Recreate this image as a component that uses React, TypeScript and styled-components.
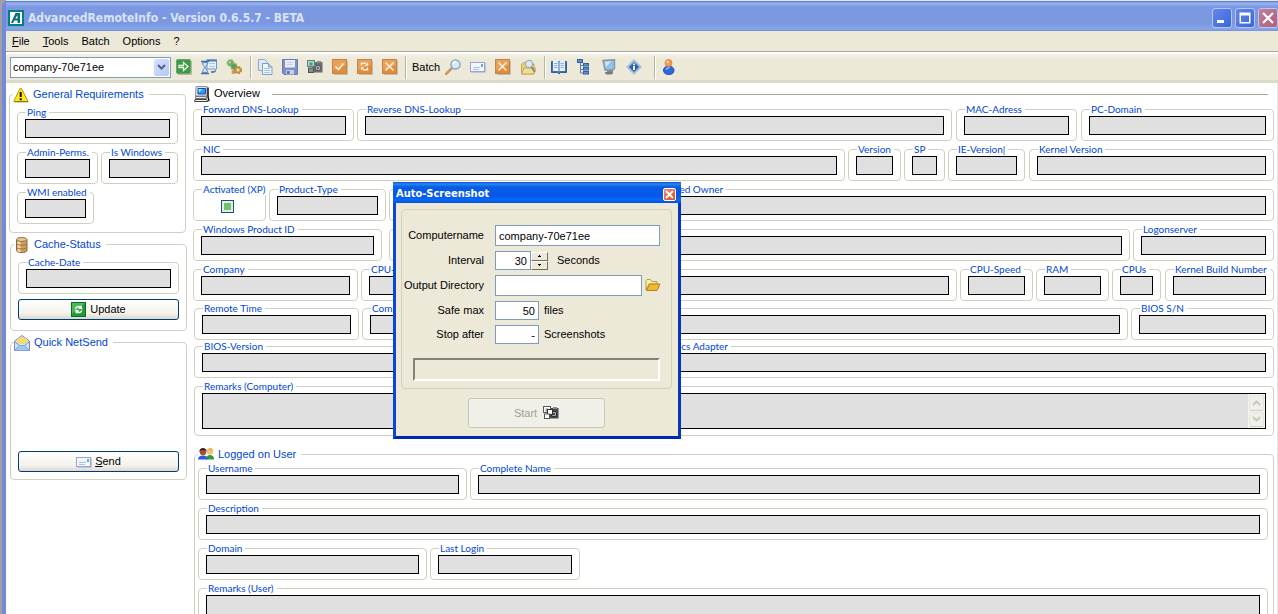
import React, { useId } from "react";
import styled, { createGlobalStyle, css } from "styled-components";

const ui = '"Liberation Sans", Arial, sans-serif';
const face = "#ece9d8";
const groupLine = "#d0d0bf";
const captionBlue = "#0046d5";
const fieldBlue = "#7f9db9";

const Global = createGlobalStyle`
  * { box-sizing: border-box; }
  body { margin: 0; background: #fff; font: 11px/13px ${ui}; color: #000; }
  button, input, select, textarea { font: inherit; color: inherit; margin: 0; }
`;

/* ---------- window frame ---------- */

const Desktop = styled.div`
  position: relative;
  height: 100vh;
  overflow: hidden;
  display: flex;
  background: #a0a0a0;
`;
const WindowFrame = styled.div`
  flex: 1;
  min-width: 0;
  margin-left: 2px;
  display: flex;
  flex-direction: column;
  border-left: 4px solid #7389dc;
  border-top-left-radius: 7px;
  background: #7389dc;
`;
const TitleBar = styled.header`
  height: 31px;
  flex: none;
  display: flex;
  align-items: center;
  padding: 3px 0 0 2px;
  border-top: 1px solid #e4e8f4;
  background: linear-gradient(#4f6fc8 0, #9ab5f2 2px, #7c98e2 6px, #7b97e0 22px, #86a6ea 28px, #7590da 30px);
`;
const Title = styled.h1`
  flex: 1;
  margin: 0 0 0 4px;
  font: bold 12px/16px "DejaVu Sans Condensed", sans-serif;
  color: #d8e4f8;
`;
const CaptionButtons = styled.div`
  display: flex;
  gap: 3px;
`;
const CaptionButton = styled.button<{ $close?: boolean }>`
  width: 20px;
  height: 20px;
  padding: 0;
  display: grid;
  place-items: center;
  border: 1px solid #b8c8f4;
  border-radius: 3px;
  background: ${(p) => (p.$close ? "linear-gradient(135deg, #c08098, #b0607c)" : "linear-gradient(135deg, #6488ea, #3a64dc)")};
`;

const MenuBar = styled.nav`
  height: 20px;
  flex: none;
  display: flex;
  align-items: center;
  gap: 13px;
  padding: 0 6px;
  background: ${face};
`;
const MenuItem = styled.button`
  padding: 0;
  border: 0;
  background: none;
`;

const Toolbar = styled.div`
  height: 32px;
  flex: none;
  display: flex;
  align-items: center;
  padding: 3px 4px 1px;
  border-top: 1px solid #aca899;
  border-bottom: 3px solid #dedac8;
  background: linear-gradient(#fff 0, #fff 2px, #f3f1e6 2px, ${face} 8px);
`;
const HostPicker = styled.div`
  position: relative;
  width: 161px;
  height: 21px;
  border: 1px solid ${fieldBlue};
  background: #fff;
`;
const HostSelect = styled.select`
  appearance: none;
  width: 100%;
  height: 19px;
  padding: 0 18px 0 2px;
  border: 0;
  background: none;
`;
const DropArrow = styled.span`
  position: absolute;
  top: 1px;
  right: 1px;
  width: 15px;
  height: 17px;
  display: grid;
  place-items: center;
  border-radius: 2px;
  background: linear-gradient(135deg, #d4e0fc, #b4c8f6);
  pointer-events: none;
`;
const ToolButton = styled.button`
  width: 25px;
  height: 22px;
  padding: 0;
  display: grid;
  place-items: center;
  border: 0;
  background: none;
`;
const ToolSeparator = styled.span<{ $before?: number }>`
  width: 2px;
  height: 23px;
  margin-left: ${(p) => p.$before ?? 4}px;
  border-left: 1px solid #b8b4a2;
  border-right: 1px solid #fff;
`;
const ToolLabel = styled.span`
  width: 33px;
  padding-left: 5px;
`;

/* ---------- group boxes and fields ---------- */

const Client = styled.div`
  flex: 1;
  min-height: 0;
  display: flex;
  gap: 6px;
  padding: 2px 3px 0;
  overflow: hidden;
  background: #fff;
  border-right: 1px solid #e4e4e4;
`;
const Sidebar = styled.aside`
  width: 178px;
  flex: none;
  display: flex;
  flex-direction: column;
  gap: 3px;
  padding-top: 1px;
`;
const SidebarTop = styled.div`
  padding-right: 1px;
`;
const SidebarRest = styled.div`
  display: flex;
  flex-direction: column;
  gap: 3px;
  padding-left: 1px;
`;
const Section = styled.fieldset`
  min-width: 0;
  margin: 0;
  padding: 0;
  border: 1px solid ${groupLine};
  border-radius: 4px;
`;
const SectionLegend = styled.legend`
  height: 17px;
  margin-left: 3px;
  padding: 0 5px 0 0;
  display: flex;
  align-items: center;
  gap: 4px;
  color: ${captionBlue};
`;
const SectionBody = styled.div<{ $pad: string }>`
  display: flex;
  flex-direction: column;
  padding: ${(p) => p.$pad};
`;

const Row = styled.div<{ $after?: number; $indent?: number }>`
  display: flex;
  gap: 3px;
  margin-bottom: ${(p) => p.$after ?? 3}px;
  margin-left: ${(p) => p.$indent ?? 0}px;
`;
const FieldBox = styled.fieldset<{ $w?: number; $after?: number; $pb?: number }>`
  ${(p) => (p.$w ? css`flex: none; width: ${p.$w}px;` : css`flex: 1;`)}
  min-width: 0;
  margin: 0 ${(p) => p.$after ?? 0}px 0 0;
  padding: 1px 7px ${(p) => p.$pb ?? 5}px;
  border: 1px solid ${groupLine};
  border-radius: 4px;
`;
const FieldLegend = styled.legend`
  height: 11px;
  margin-left: 1px;
  padding: 0 3px 0 1px;
  font: 10px/11px Lato, ${ui};
  color: ${captionBlue};
  white-space: nowrap;
`;
const sunken = css`
  display: block;
  width: 100%;
  padding: 0 2px;
  border: 1px solid #000;
  border-radius: 0;
  outline: 0;
  background: #e0e0e0;
`;
const ReadOnly = styled.input`
  ${sunken}
  height: 19px;
`;
const Remarks = styled.textarea`
  ${sunken}
  height: 36px;
  resize: none;
  overflow: hidden;
`;
const RemarksWrap = styled.div`
  position: relative;
`;
const ScrollButtons = styled.div`
  position: absolute;
  top: 1px;
  right: 1px;
  bottom: 1px;
  width: 17px;
  display: flex;
  flex-direction: column;
  gap: 1px;
  padding: 1px;
  background: #f6f5ef;
`;
const ScrollButton = styled.button`
  flex: 1;
  min-height: 0;
  padding: 0;
  display: grid;
  place-items: center;
  border: 1px solid #e6e5dc;
  border-bottom-color: #cfccb8;
  border-radius: 2px;
  background: #f0f0ea;
`;
const CheckCell = styled.div`
  height: 19px;
  display: grid;
  place-items: center;
  padding: 2px 4px 0 0;
`;
const StateBox = styled.input`
  appearance: none;
  width: 13px;
  height: 13px;
  border: 1px solid #1c5180;
  background: #fff;
  &:checked {
    background: linear-gradient(#73c06f, #73c06f) center / 7px 7px no-repeat, #e6ecdf;
  }
`;
const PushButton = styled.button`
  height: 21px;
  display: flex;
  align-items: center;
  justify-content: center;
  gap: 3px;
  padding: 0;
  border: 1px solid #003c74;
  border-radius: 3px;
  background: linear-gradient(#fff, #f3f2ec 70%, #dcd8cc);
`;
const SendArea = styled.div`
  height: 100px;
`;

const Main = styled.main`
  flex: 1;
  min-width: 0;
`;
const OverviewHead = styled.div`
  height: 17px;
  display: flex;
  align-items: center;
  gap: 4px;
  margin-bottom: 2px;
  padding: 0 6px 0 1px;
`;
const OverviewTitle = styled.h2`
  margin: 0 8px 0 0;
  font: 11px/13px ${ui};
`;
const Rule = styled.hr`
  flex: 1;
  margin: 1px 0 0;
  border: 0;
  border-top: 1px solid #aca899;
`;
const UserSection = styled.div`
  margin: 10px 0 0 1px;
`;

type FieldProps = { label?: string; name?: string; w?: number; after?: number };

function Field({ label, name, w, after }: FieldProps) {
  const id = useId();
  return (
    <FieldBox $w={w} $after={after}>
      <FieldLegend>{label && <label htmlFor={id}>{label}</label>}</FieldLegend>
      <ReadOnly id={id} readOnly aria-label={name} />
    </FieldBox>
  );
}

function RemarksField({ label, scroll }: { label: string; scroll?: boolean }) {
  const id = useId();
  return (
    <FieldBox $pb={6}>
      <FieldLegend><label htmlFor={id}>{label}</label></FieldLegend>
      <RemarksWrap>
        <Remarks id={id} readOnly />
        {scroll && (
          <ScrollButtons>
            <ScrollButton aria-label="Scroll up">
              <svg width="9" height="6" viewBox="0 0 9 6"><path d="M1 5 4.500 1.500 8 5" fill="none" stroke="#c9c7ba" strokeWidth="2" /></svg>
            </ScrollButton>
            <ScrollButton aria-label="Scroll down">
              <svg width="9" height="6" viewBox="0 0 9 6"><path d="M1 1 4.500 4.500 8 1" fill="none" stroke="#c9c7ba" strokeWidth="2" /></svg>
            </ScrollButton>
          </ScrollButtons>
        )}
      </RemarksWrap>
    </FieldBox>
  );
}

/* ---------- dialog ---------- */

const Dialog = styled.section`
  position: absolute;
  left: 393px;
  top: 182px;
  width: 288px;
  display: flex;
  flex-direction: column;
  border: 3px solid #0a46d8;
  border-top: 0;
  border-right-color: #0636c0;
  border-bottom-color: #0226b4;
  background: ${face};
`;
const DialogTitleBar = styled.header`
  height: 21px;
  margin: 0 -3px;
  padding: 3px 5px 0 3px;
  display: flex;
  align-items: center;
  justify-content: space-between;
  background: linear-gradient(#0a4ad0, #2a86f4 2px, #0a5ce4 5px, #0458e8 14px, #0768f8 18px, #0450d8);
`;
const DialogTitle = styled.h2`
  margin: 0;
  font: bold 11px/14px "DejaVu Sans Condensed", sans-serif;
  color: #fff;
`;
const DialogClose = styled.button`
  width: 13px;
  height: 13px;
  padding: 0;
  display: grid;
  place-items: center;
  border: 1px solid #fff;
  border-radius: 2px;
  background: linear-gradient(135deg, #f09078, #d84820);
`;
const DialogBody = styled.form`
  display: flex;
  flex-direction: column;
  align-items: center;
  gap: 9px;
  padding: 6px 6px 8px 5px;
`;
const Panel = styled.div`
  width: 100%;
  display: flex;
  flex-direction: column;
  gap: 5px;
  padding: 15px 0 7px;
  border: 1px solid ${groupLine};
  border-radius: 4px;
`;
const FormRow = styled.div`
  display: flex;
  align-items: center;
`;
const FormLabel = styled.label`
  width: 82px;
  margin-right: 11px;
  text-align: right;
  white-space: nowrap;
`;
const TextBox = styled.input<{ $w: number; $short?: boolean }>`
  width: ${(p) => p.$w}px;
  height: ${(p) => (p.$short ? 19 : 21)}px;
  padding: 0 3px;
  border: 1px solid ${fieldBlue};
  border-radius: 0;
  outline: 0;
  background: #fff;
  text-align: ${(p) => (p.$short ? "right" : "left")};
`;
const Suffix = styled.span<{ $gap: number }>`
  margin-left: ${(p) => p.$gap}px;
`;
const Spinner = styled.span`
  display: flex;
  flex-direction: column;
  width: 17px;
`;
const SpinButton = styled.button`
  height: 9px;
  padding: 0;
  display: grid;
  place-items: center;
  border: 1px solid;
  border-color: #fff #716f64 #716f64 #fff;
  background: ${face};
`;
const BrowseButton = styled.button`
  width: 16px;
  height: 16px;
  margin-left: 3px;
  padding: 0;
  border: 0;
  background: none;
`;
const Progress = styled.div`
  height: 23px;
  margin: 9px 11px 0;
  border: 2px solid;
  border-color: #848178 #fff #fff #848178;
`;
const StartButton = styled.button`
  width: 137px;
  height: 30px;
  display: flex;
  align-items: center;
  justify-content: center;
  gap: 6px;
  padding: 0;
  border: 1px solid #c9c7ba;
  border-radius: 3px;
  background: #f0efe8;
  &:disabled { color: #a1a192; }
`;

/* ---------- icons ---------- */

const Glyph = styled.svg.attrs({ viewBox: "0 0 16 16", width: 16, height: 16, "aria-hidden": true })`
  display: block;
  flex: none;
`;

const AppIcon = () => (
  <Glyph>
    <rect width="16" height="16" fill="#008080" />
    <rect x="2" y="2" width="12" height="12" fill="#fff" />
    <path d="M3 13 7.500 3H12v10H9.500v-2.500H6.300L5 13zM7.300 8.500h2.200V5z" fill="#087078" fillRule="evenodd" />
  </Glyph>
);
const GoIcon = () => (
  <Glyph>
    <path d="M2 15.500h13.500V2" stroke="#b9b7a8" fill="none" />
    <rect x=".5" y=".5" width="14" height="14" rx="1" fill="#3f9a45" stroke="#6aa66c" />
    <path d="M3 6.500h4.500V3.500l4.500 4-4.500 4v-3H3z" fill="none" stroke="#e4f4e2" strokeWidth="1.300" />
  </Glyph>
);
const HourglassIcon = () => (
  <Glyph>
    <rect x="6" y="1" width="9.500" height="9" fill="#e8f2fc" stroke="#6a94ca" />
    <path d="M6 1.500h9.500" stroke="#4c7cba" strokeWidth="2" />
    <path d="M9 4v1M11 4v1M13 4v1M9 7v1M11 7v1M13 7v1" stroke="#6f9ed4" />
    <path d="M0 2.500h8M0 14.500h8" stroke="#4470aa" strokeWidth="1.600" />
    <path d="M1.500 3.500c0 3 2 3.500 2 5s-2 2-2 5h5c0-3-2-3.500-2-5s2-2 2-5z" fill="#cfe0f4" stroke="#5f88be" />
    <path d="M10 12c3 0 4-.5 5-1.500v2c-1 1-3 1.500-5 1.500z" fill="#5a84be" />
  </Glyph>
);
const GearsIcon = () => (
  <Glyph>
    <circle cx="4.500" cy="4" r="3.200" fill="#6faa5c" stroke="#8fbf7e" strokeWidth="1.500" strokeDasharray="2 1" />
    <circle cx="8" cy="7.500" r="3" fill="#5d9c55" stroke="#7ab070" strokeWidth="1.500" strokeDasharray="2 1" />
    <circle cx="12" cy="11" r="3.200" fill="#cfa24a" stroke="#b98a35" strokeWidth="1.800" strokeDasharray="2 1" />
    <circle cx="12" cy="11" r="1.200" fill="#ece9d8" />
    <circle cx="4" cy="3.500" r="1" fill="#d4e6cc" />
    <circle cx="7.500" cy="13" r="2" fill="#c99b46" />
  </Glyph>
);
const CopyIcon = () => (
  <Glyph>
    <path d="M1.500.5h6l3 3v8h-9z" fill="#dfeaf6" stroke="#8ea9c6" />
    <path d="M5.500 4.500h6l3.500 3.500v7.500H5.500z" fill="#f0f6fc" stroke="#7f9dbd" />
    <path d="M11.500 4.500V8H15" fill="#b8cee6" stroke="#7f9dbd" />
    <path d="M7 9.500h6M7 11.500h6M7 13.500h6" stroke="#a9c4e2" />
  </Glyph>
);
const SaveIcon = () => (
  <Glyph>
    <path d="M.5.5h15v15H2l-1.500-1.500z" fill="#7f8fc4" stroke="#6a7ab2" />
    <rect x="3" y="1" width="10" height="7.500" fill="#e9edf7" />
    <path d="M5 3.500h6M5 5.500h6" stroke="#c9d0e6" />
    <rect x="4" y="11" width="8" height="4.500" fill="#c8cfe4" />
    <rect x="5" y="12" width="2.500" height="3" fill="#5c6ca6" />
  </Glyph>
);
const CameraIcon = ({ grey }: { grey?: boolean }) => (
  <Glyph>
    <path d="M6 3h9.500v10.500H5z" fill={grey ? "#4a4a4a" : "#6c6f6c"} />
    <path d="M10 2h4v2h-4z" fill="#8a8c88" />
    <rect x=".5" y="1.500" width="7" height="6" fill={grey ? "#fff" : "#a9d8c4"} stroke={grey ? "#5a5a5a" : "#5c7f88"} />
    <rect x="2.500" y="3.500" width="3" height="3" fill={grey ? "#999" : "#4c9a72"} />
    <circle cx="11" cy="9" r="2.800" fill={grey ? "#bbb" : "#b4bcc0"} stroke={grey ? "#222" : "#4f5558"} />
    <circle cx="11" cy="9" r="1.200" fill={grey ? "#444" : "#566a78"} />
    {grey && <rect x="4.500" y="4.500" width="5" height="5" fill="#fff" stroke="#333" />}
    <rect x="1.500" y="9" width="5" height="4.500" fill={grey ? "#fff" : "#8b8e8a"} stroke="#555" />
  </Glyph>
);
const OrangeTile = ({ children }: { children: React.ReactNode }) => (
  <Glyph>
    <path d="M2 15.500h13.500V2" stroke="#c2bfae" fill="none" />
    <rect x=".5" y=".5" width="14" height="14" fill="#df8f3c" stroke="#c98445" />
    <path d="M1 1h13v5L1 11z" fill="#e8a258" />
    <g fill="none" stroke="#fbeedd" strokeWidth="1.600">{children}</g>
  </Glyph>
);
const CheckTile = () => <OrangeTile><path d="M3.500 7.500 6.500 10.500 11.500 4.500" /></OrangeTile>;
const RefreshTile = () => (
  <OrangeTile>
    <path d="M4.500 6.500V4.300H9M10.500 8.500v2.200H6" strokeWidth="1.400" />
    <path d="M7.500 6.800H11V3.300zM7.500 8.200H4v3.500z" fill="#fbeedd" stroke="none" />
  </OrangeTile>
);
const CrossTile = () => <OrangeTile><path d="M3.500 3.500 11.500 11.500M11.500 3.500 3.500 11.500" /></OrangeTile>;
const MagnifierIcon = () => (
  <Glyph>
    <path d="M1 15 6.500 9.500" stroke="#c99a5c" strokeWidth="2.600" strokeLinecap="round" />
    <circle cx="10.500" cy="5.500" r="4.500" fill="#d6e9f8" stroke="#8aa8c6" strokeWidth="1.500" />
    <path d="M8 5a3 3 0 0 1 3-2.500" stroke="#fff" strokeWidth="1.500" fill="none" />
  </Glyph>
);
const LetterIcon = () => (
  <Glyph>
    <rect x=".5" y="3.500" width="14" height="9" fill="#f4f8fe" stroke="#9aa4cc" />
    <path d="M3 8.500h7M3 10.500h6" stroke="#9fc4ee" />
    <rect x="11" y="5" width="2" height="3" fill="#6fa4e4" />
    <path d="M1 13.500h14.500V4" stroke="#c5c6cf" fill="none" />
  </Glyph>
);
const FolderSearchIcon = () => (
  <Glyph>
    <path d="M1.500 15V5l2-1.500h3L8 5h6v10z" fill="#e8cf7c" stroke="#c4a75a" />
    <path d="M1.500 15 4 9h11.500L14 15z" fill="#f1dd94" stroke="#c4a75a" />
    <circle cx="9" cy="5" r="3.700" fill="#d8e8ee" stroke="#8ea6ae" />
    <path d="m11.500 8 3.500 5" stroke="#8a8a78" strokeWidth="2" />
  </Glyph>
);
const BookIcon = () => (
  <Glyph>
    <path d="M.5 2.500h15v11H9.500L8 15l-1.500-1.500H.5z" fill="#3f70b0" stroke="#33609c" />
    <path d="M2 2h4.500L8 3v9.500l-1.500-.5H2zM14 2H9.500L8 3v9.500l1.500-.5H14z" fill="#e6f0fa" />
    <path d="M3 4.500h3.500M3 6.500h3.500M3 8.500h3.500M9.500 4.500H13M9.500 6.500H13M9.500 8.500H13" stroke="#8fb2dc" />
    <path d="M8 3v10" stroke="#3f70b0" />
  </Glyph>
);
const TreeIcon = () => (
  <Glyph>
    <path d="M4.500 4v10M4.500 6.500H9M4.500 10.500H9M4.500 14H9" stroke="#5d7fae" fill="none" />
    <g fill="#5c92d8" stroke="#30609e"><rect x="1.500" y=".5" width="5" height="3" /><rect x="7.500" y="4.500" width="5" height="2.500" /><rect x="7.500" y="8.500" width="5" height="2.500" /><rect x="7.500" y="12.500" width="5" height="2.500" /></g>
  </Glyph>
);
const MonitorIcon = () => (
  <Glyph>
    <path d="M2 1.500 13.500.7v8.800L12 11 4 11z" fill="#8fc4ea" stroke="#8a94a0" strokeWidth="1.400" />
    <path d="M4 3l6-.7L5 8z" fill="#cfe8fa" />
    <path d="M6 11h6v2l-2 .5H6z" fill="#8a8c88" />
    <ellipse cx="8" cy="14" rx="4" ry="1.500" fill="#777a76" />
  </Glyph>
);
const InfoIcon = () => (
  <Glyph>
    <path d="M8 .5 15.500 8 8 15.500.5 8z" fill="#9dbade" stroke="#b3c4d8" />
    <path d="M8 3 13 8 8 13 3 8z" fill="#2d62aa" />
    <path d="M8 4.500v1.700M8 7v4" stroke="#fff" strokeWidth="1.800" />
  </Glyph>
);
const UserIcon = () => (
  <Glyph>
    <path d="M2.500 11c0-5 10.500-5 10.500 0 0 3-2 4.500-5.200 4.500S2.500 14 2.500 11z" fill="#2f66dc" stroke="#2450b8" />
    <circle cx="7.500" cy="4" r="3.500" fill="#f09a50" stroke="#d97f38" strokeWidth=".8" />
    <circle cx="6.500" cy="3" r="1.300" fill="#fbd0a4" />
    <path d="M5 10.500c1-1.500 2.500-1.800 3.500-1.800" stroke="#9fc0fa" strokeWidth="1.400" fill="none" />
  </Glyph>
);
const WarningIcon = () => (
  <Glyph>
    <path d="M7 1.500h1.500l6.500 13H.7z" fill="#ffe81a" stroke="#b99a10" strokeLinejoin="round" />
    <path d="M15 14.800H2" stroke="#7a6a20" />
    <path d="M7.700 5v5M7.700 11.300v2" stroke="#111" strokeWidth="2" />
  </Glyph>
);
const DatabaseIcon = () => (
  <Glyph>
    <path d="M2.500 2.500v11c0 2.700 10.500 2.700 10.500 0v-11z" fill="#cf9f58" stroke="#8d6a3c" />
    <path d="M3.500 3v11c1 .8 2 1 3 1V3z" fill="#f2dcae" />
    <ellipse cx="7.700" cy="2.500" rx="5.200" ry="2" fill="#e6c892" stroke="#93703c" />
    <path d="M2.500 6.500c0 2.300 10.500 2.300 10.500 0M2.500 10.200c0 2.300 10.500 2.300 10.500 0" stroke="#95703e" fill="none" />
  </Glyph>
);
const MailOpenIcon = () => (
  <Glyph>
    <path d="M.5 6 8 .5 15.500 6v9.500H.5z" fill="#cfe2fa" stroke="#8288bc" />
    <path d="M2.500 6C3 1 13 1 13.500 6L10.500 9h-5z" fill="#f7dc62" />
    <path d="M.5 6.500 5.500 10.500h5l5-4" stroke="#8288bc" fill="none" />
    <path d="M.5 15.500 5.500 10.500h5l5 5z" fill="#9cc6f4" stroke="#8aa0d4" />
  </Glyph>
);
const UpdateIcon = () => (
  <Glyph>
    <rect x=".5" y=".5" width="14" height="14" fill="#1f9a34" stroke="#0f6c20" />
    <path d="M1 1h13L1 12z" fill="#4cb85a" />
    <path d="M4 6.500C5 3.500 8 3 9.500 4.300L10.500 3l1 4.300-4.500-.3 1.500-1.200C7.500 5 6 5 5 7zM11.500 8.500c-1 3-4 3.500-5.500 2.200L5 12 4 7.700l4.500.3L7 9.200c1 .8 2.500.8 3.500-1.200z" fill="#fff" />
  </Glyph>
);
const ComputerIcon = () => (
  <Glyph>
    <path d="M2 .5h11v9.500H1.500z" fill="#dde2ea" stroke="#8a8f98" />
    <path d="M4 2.500h7.500v5.500H4z" fill="#2a9cf0" stroke="#1450a8" />
    <path d="M4.500 3h4L5 6.500z" fill="#a8e4ff" />
    <path d="M1.500 10.500h11v2h-11z" fill="#e2e5ea" stroke="#777" />
    <path d="M1 13.500h11.500l1.500 2H.5z" fill="#f4f2e6" stroke="#444" />
    <path d="M14 1.500v9.500l1 4" stroke="#111" strokeWidth="1.500" fill="none" />
  </Glyph>
);
const UsersIcon = () => (
  <Glyph>
    <path d="M8 12c0-3 2-4 4-4s4 1 4 4v.5H8z" fill="#2f9a3a" />
    <circle cx="12" cy="4.500" r="3.200" fill="#f2c078" />
    <path d="M8.800 4C9 .5 15.500 0 15.300 4l-1-1.500H10z" fill="#e0a83a" />
    <path d="M0 12.500C0 10 2 8.500 5 8.500s4.500 1.500 4.500 4z" fill="#2a5ce0" />
    <circle cx="5" cy="5" r="3.200" fill="#a8502c" />
    <path d="M1.200 5C1-.5 9-.5 8.700 5L7.500 3.300H3z" fill="#2a2422" />
  </Glyph>
);
const FolderIcon = () => (
  <Glyph>
    <path d="M1 12V2.500l1-1h3.500L7 3.500h5V6H4z" fill="#faf0a0" stroke="#b8a048" />
    <path d="M1.500 12.500 4.500 6H15l-3 6.500z" fill="#f2b832" stroke="#a98428" />
  </Glyph>
);

const SpinArrow = ({ d }: { d: string }) => (
  <svg width="5" height="3" viewBox="0 0 5 3" aria-hidden><path d={d} fill="#000" /></svg>
);

export default function App() {
  return (
    <>
      <Global />
      <Desktop>
        <WindowFrame>
          <TitleBar>
            <AppIcon />
            <Title>AdvancedRemoteInfo - Version 0.6.5.7 - BETA</Title>
            <CaptionButtons>
              <CaptionButton aria-label="Minimize">
                <svg width="12" height="12" viewBox="0 0 12 12"><path d="M1 9.500h7" stroke="#fff" strokeWidth="3" /></svg>
              </CaptionButton>
              <CaptionButton aria-label="Maximize">
                <svg width="12" height="12" viewBox="0 0 12 12"><path d="M.5.500h11v11H.5zM2 3.500v6.500h8v-6.500z" fill="#fff" fillRule="evenodd" /></svg>
              </CaptionButton>
              <CaptionButton $close aria-label="Close">
                <svg width="12" height="12" viewBox="0 0 12 12"><path d="m1 1 10 10M11 1 1 11" stroke="#fff" strokeWidth="2.200" /></svg>
              </CaptionButton>
            </CaptionButtons>
          </TitleBar>
          <MenuBar>
            <MenuItem><u>F</u>ile</MenuItem>
            <MenuItem><u>T</u>ools</MenuItem>
            <MenuItem>Batch</MenuItem>
            <MenuItem>Options</MenuItem>
            <MenuItem>?</MenuItem>
          </MenuBar>
          <Toolbar>
            <HostPicker>
              <HostSelect aria-label="Computer" defaultValue="company-70e71ee">
                <option>company-70e71ee</option>
              </HostSelect>
              <DropArrow>
                <svg width="9" height="6" viewBox="0 0 9 6"><path d="M1 1 4.500 4.500 8 1" fill="none" stroke="#4d6185" strokeWidth="2" /></svg>
              </DropArrow>
            </HostPicker>
            <ToolButton aria-label="Go"><GoIcon /></ToolButton>
            <ToolButton aria-label="Schedule"><HourglassIcon /></ToolButton>
            <ToolButton aria-label="Settings"><GearsIcon /></ToolButton>
            <ToolSeparator />
            <ToolButton aria-label="Copy"><CopyIcon /></ToolButton>
            <ToolButton aria-label="Save"><SaveIcon /></ToolButton>
            <ToolButton aria-label="Screenshot"><CameraIcon /></ToolButton>
            <ToolButton aria-label="Check"><CheckTile /></ToolButton>
            <ToolButton aria-label="Refresh"><RefreshTile /></ToolButton>
            <ToolButton aria-label="Cancel"><CrossTile /></ToolButton>
            <ToolSeparator $before={3} />
            <ToolLabel>Batch</ToolLabel>
            <ToolButton aria-label="Search"><MagnifierIcon /></ToolButton>
            <ToolButton aria-label="Message"><LetterIcon /></ToolButton>
            <ToolButton aria-label="Cancel batch"><CrossTile /></ToolButton>
            <ToolButton aria-label="Search folder"><FolderSearchIcon /></ToolButton>
            <ToolSeparator />
            <ToolButton aria-label="Address book"><BookIcon /></ToolButton>
            <ToolButton aria-label="Tree"><TreeIcon /></ToolButton>
            <ToolButton aria-label="Remote desktop"><MonitorIcon /></ToolButton>
            <ToolButton aria-label="Info"><InfoIcon /></ToolButton>
            <ToolSeparator $before={8} />
            <ToolButton aria-label="User"><UserIcon /></ToolButton>
          </Toolbar>

          <Client>
            <Sidebar>
              <SidebarTop>
                <Section>
                  <SectionLegend><WarningIcon />General Requirements</SectionLegend>
                  <SectionBody $pad="4px 7px 5px">
                    <Row><Field label="Ping" /></Row>
                    <Row><Field label="Admin-Perms." w={81} /><Field label="Is Windows" /></Row>
                    <Row><Field label="WMI enabled" w={77} /></Row>
                  </SectionBody>
                </Section>
              </SidebarTop>
              <SidebarRest>
                <Section>
                  <SectionLegend><DatabaseIcon />Cache-Status</SectionLegend>
                  <SectionBody $pad="4px 7px 10px">
                    <Row $after={5}><Field label="Cache-Date" /></Row>
                    <PushButton><UpdateIcon />Update</PushButton>
                  </SectionBody>
                </Section>
                <Section>
                  <SectionLegend><MailOpenIcon />Quick NetSend</SectionLegend>
                  <SectionBody $pad="0 7px 7px">
                    <SendArea />
                    <PushButton><LetterIcon /><span><u>S</u>end</span></PushButton>
                  </SectionBody>
                </Section>
              </SidebarRest>
            </Sidebar>

            <Main>
              <OverviewHead>
                <ComputerIcon />
                <OverviewTitle>Overview</OverviewTitle>
                <Rule />
              </OverviewHead>
              <Row>
                <Field label="Forward DNS-Lookup" w={161} />
                <Field label="Reverse DNS-Lookup" after={1} />
                <Field label="MAC-Adress" w={121} after={1} />
                <Field label="PC-Domain" w={193} />
              </Row>
              <Row>
                <Field label="NIC" />
                <Field label="Version" w={53} />
                <Field label="SP" w={41} />
                <Field label="IE-Version|" w={77} after={1} />
                <Field label="Kernel Version" w={245} />
              </Row>
              <Row>
                <FieldBox $w={73}>
                  <FieldLegend><label htmlFor="activated">Activated (XP)</label></FieldLegend>
                  <CheckCell><StateBox id="activated" type="checkbox" defaultChecked /></CheckCell>
                </FieldBox>
                <Field label="Product-Type" w={117} />
                <Field name="Registered Organization" w={242} />
                <Field label="Registered Owner" />
              </Row>
              <Row>
                <Field label="Windows Product ID" w={189} after={4} />
                <Field name="Windows Version" />
                <Field label="Logonserver" w={141} />
              </Row>
              <Row $after={2}>
                <Field label="Company" w={165} />
                <Field label="CPU-Type" />
                <Field label="CPU-Speed" w={73} />
                <Field label="RAM" w={73} />
                <Field label="CPUs" w={49} after={1} />
                <Field label="Kernel Build Number" w={109} />
              </Row>
              <Row $after={1} $indent={1}>
                <Field label="Remote Time" w={165} />
                <Field label="Computer" />
                <Field label="BIOS S/N" w={143} />
              </Row>
              <Row $indent={1}>
                <Field label="BIOS-Version" w={445} />
                <Field label="Graphics Adapter" />
              </Row>
              <Row $after={0} $indent={1}><RemarksField label="Remarks (Computer)" scroll /></Row>

              <UserSection>
                <Section>
                  <SectionLegend><UsersIcon />Logged on User</SectionLegend>
                  <SectionBody $pad="0 5px 4px 3px">
                    <Row>
                      <Field label="Username" w={269} />
                      <Field label="Complete Name" />
                    </Row>
                    <Row><Field label="Description" /></Row>
                    <Row>
                      <Field label="Domain" w={229} />
                      <Field label="Last Login" w={150} />
                    </Row>
                    <Row><RemarksField label="Remarks (User)" /></Row>
                  </SectionBody>
                </Section>
              </UserSection>
            </Main>
          </Client>
        </WindowFrame>

        <Dialog role="dialog" aria-labelledby="shot-title">
          <DialogTitleBar>
            <DialogTitle id="shot-title">Auto-Screenshot</DialogTitle>
            <DialogClose aria-label="Close dialog">
              <svg width="9" height="9" viewBox="0 0 9 9"><path d="m1 1 7 7M8 1 1 8" stroke="#fff" strokeWidth="1.800" /></svg>
            </DialogClose>
          </DialogTitleBar>
          <DialogBody onSubmit={(e) => e.preventDefault()}>
            <Panel>
              <FormRow>
                <FormLabel htmlFor="computername">Computername</FormLabel>
                <TextBox id="computername" $w={165} defaultValue="company-70e71ee" />
              </FormRow>
              <FormRow>
                <FormLabel htmlFor="interval">Interval</FormLabel>
                <TextBox id="interval" $w={36} $short defaultValue="30" />
                <Spinner>
                  <SpinButton type="button" aria-label="More"><SpinArrow d="M2 0h1v1h1v1H1V1h1z" /></SpinButton>
                  <SpinButton type="button" aria-label="Less"><SpinArrow d="M1 0h3v1H3v1H2V1H1z" /></SpinButton>
                </Spinner>
                <Suffix $gap={9}>Seconds</Suffix>
              </FormRow>
              <FormRow>
                <FormLabel htmlFor="outdir">Output Directory</FormLabel>
                <TextBox id="outdir" $w={147} />
                <BrowseButton type="button" aria-label="Browse"><FolderIcon /></BrowseButton>
              </FormRow>
              <FormRow>
                <FormLabel htmlFor="safemax">Safe max</FormLabel>
                <TextBox id="safemax" $w={44} $short defaultValue="50" />
                <Suffix $gap={5}>files</Suffix>
              </FormRow>
              <FormRow>
                <FormLabel htmlFor="stopafter">Stop after</FormLabel>
                <TextBox id="stopafter" $w={44} $short defaultValue="-" />
                <Suffix $gap={5}>Screenshots</Suffix>
              </FormRow>
              <Progress role="progressbar" aria-label="Progress" />
            </Panel>
            <StartButton disabled>Start<CameraIcon grey /></StartButton>
          </DialogBody>
        </Dialog>
      </Desktop>
    </>
  );
}
